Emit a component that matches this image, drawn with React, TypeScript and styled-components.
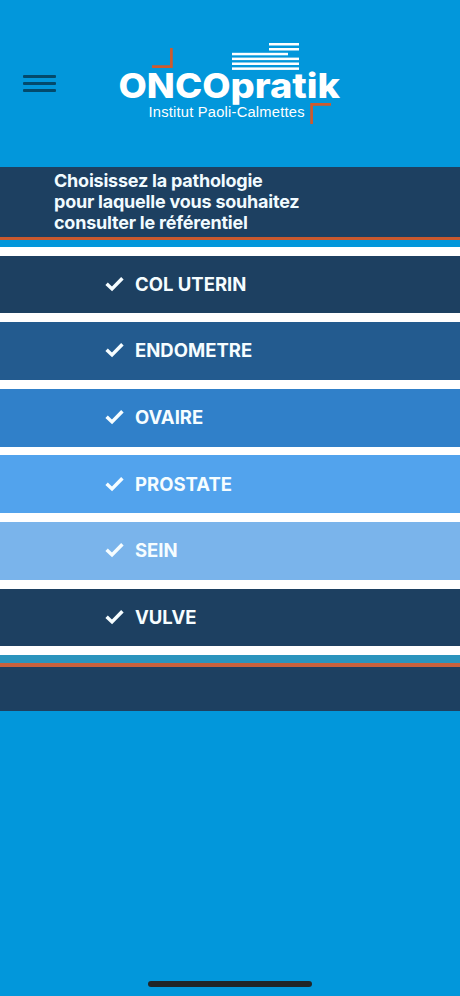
import React from "react";
import styled, { createGlobalStyle } from "styled-components";

const GlobalStyle = createGlobalStyle`
  * { box-sizing: border-box; }
  body { margin: 0; background: #0297db; font-family: Inter, "Liberation Sans", sans-serif; }
`;

const Screen = styled.div`
  display: flex;
  flex-direction: column;
  width: 100%;
  height: 996px;
  overflow: hidden;
  background: #0297db;
`;

const Header = styled.header`
  display: flex;
  align-items: flex-start;
  flex: none;
  height: 167px;
  padding: 40px 0 0 23px;
`;

const MenuButton = styled.button`
  display: flex;
  flex-direction: column;
  gap: 4px;
  width: 33px;
  margin: 35px 62px 0 0;
  padding: 0;
  border: 0;
  background: none;
`;

const MenuBar = styled.span`
  height: 3px;
  border-radius: 1px;
  background: #034a6c;
`;

const Logo = styled.svg`
  display: block;
  flex: none;
`;

const Banner = styled.section`
  flex: none;
  height: 73px;
  padding: 3px 0 0 54px;
  background: #1d4061;
  border-bottom: 3px solid #c9592e;
`;

const Title = styled.h1`
  margin: 0;
  color: #f1fbff;
  font-size: 18px;
  font-weight: 680;
  line-height: 21px;
  letter-spacing: -0.22px;
`;

const List = styled.ul`
  display: grid;
  grid-template-rows: repeat(6, 57.8px);
  gap: 8.8px;
  flex: none;
  margin: 6.8px 0 0;
  padding: 8.9px 0;
  list-style: none;
  background: #fff;
`;

const Row = styled.li<{ $color: string }>`
  display: flex;
  align-items: center;
  gap: 11px;
  padding: 0 0 1.6px 105px;
  background: ${(p) => p.$color};
  color: #f6fdff;
  font-size: 18.5px;
  font-weight: 650;
  line-height: 22px;
`;

const Footer = styled.footer`
  flex: none;
  height: 55.4px;
  border-top: 8px solid #2b94bd;
  background: #1d4061;
`;

const FooterRule = styled.div`
  height: 3.5px;
  background: #c9613d;
`;

const HomeIndicator = styled.div`
  flex: none;
  width: 164px;
  height: 6px;
  margin: auto auto 9px;
  border-radius: 3px;
  background: #202528;
`;

const items = [
  { label: "COL UTERIN", color: "#1d4061" },
  { label: "ENDOMETRE", color: "#235b8f" },
  { label: "OVAIRE", color: "#3080c9" },
  { label: "PROSTATE", color: "#52a3ed" },
  { label: "SEIN", color: "#7ab4eb" },
  { label: "VULVE", color: "#1d4061" },
];

const Check = () => (
  <svg width="19" height="16" viewBox="0 0 19 16" fill="none" stroke="#f6fdff" strokeWidth="3.5">
    <path d="M1.6 7.8 L7 12.9 L17.4 2.2" />
  </svg>
);

const Brand = () => (
  <Logo width="226" height="90" viewBox="118 40 226 90" role="img" aria-label="ONCOpratik">
    <g fill="#fff">
      <rect x="269" y="43" width="30" height="2.5" />
      <rect x="269" y="48" width="30" height="2.5" />
      <rect x="232" y="52.8" width="56" height="2.5" />
      <rect x="232" y="57.6" width="67" height="2.5" />
      <rect x="232" y="62.5" width="67" height="2.5" />
      <rect x="232" y="67.4" width="67" height="2.5" />
      <text x="118.5" y="98" fontFamily="Inter" fontWeight="850" fontSize="34" textLength="112" lengthAdjust="spacingAndGlyphs">ONCO</text>
      <text x="230.5" y="98" fontFamily="Inter" fontWeight="850" fontSize="34" textLength="109.5" lengthAdjust="spacingAndGlyphs">pratik</text>
      <text x="148.5" y="117" fontFamily="Liberation Sans" fontSize="14.7" textLength="156" lengthAdjust="spacing">Institut Paoli-Calmettes</text>
    </g>
    <g fill="none" stroke="#cf5a2d" strokeWidth="2.7">
      <path d="M152 66.6 H171.4 V48" />
      <path d="M331 104.3 H311.6 V124" />
    </g>
  </Logo>
);

export default function App() {
  return (
    <Screen>
      <GlobalStyle />
      <Header>
        <MenuButton aria-label="Menu">
          <MenuBar />
          <MenuBar />
          <MenuBar />
        </MenuButton>
        <Brand />
      </Header>
      <Banner>
        <Title>
          Choisissez la pathologie
          <br />
          pour laquelle vous souhaitez
          <br />
          consulter le référentiel
        </Title>
      </Banner>
      <List>
        {items.map((item) => (
          <Row key={item.label} $color={item.color}>
            <Check />
            {item.label}
          </Row>
        ))}
      </List>
      <Footer>
        <FooterRule />
      </Footer>
      <HomeIndicator />
    </Screen>
  );
}
